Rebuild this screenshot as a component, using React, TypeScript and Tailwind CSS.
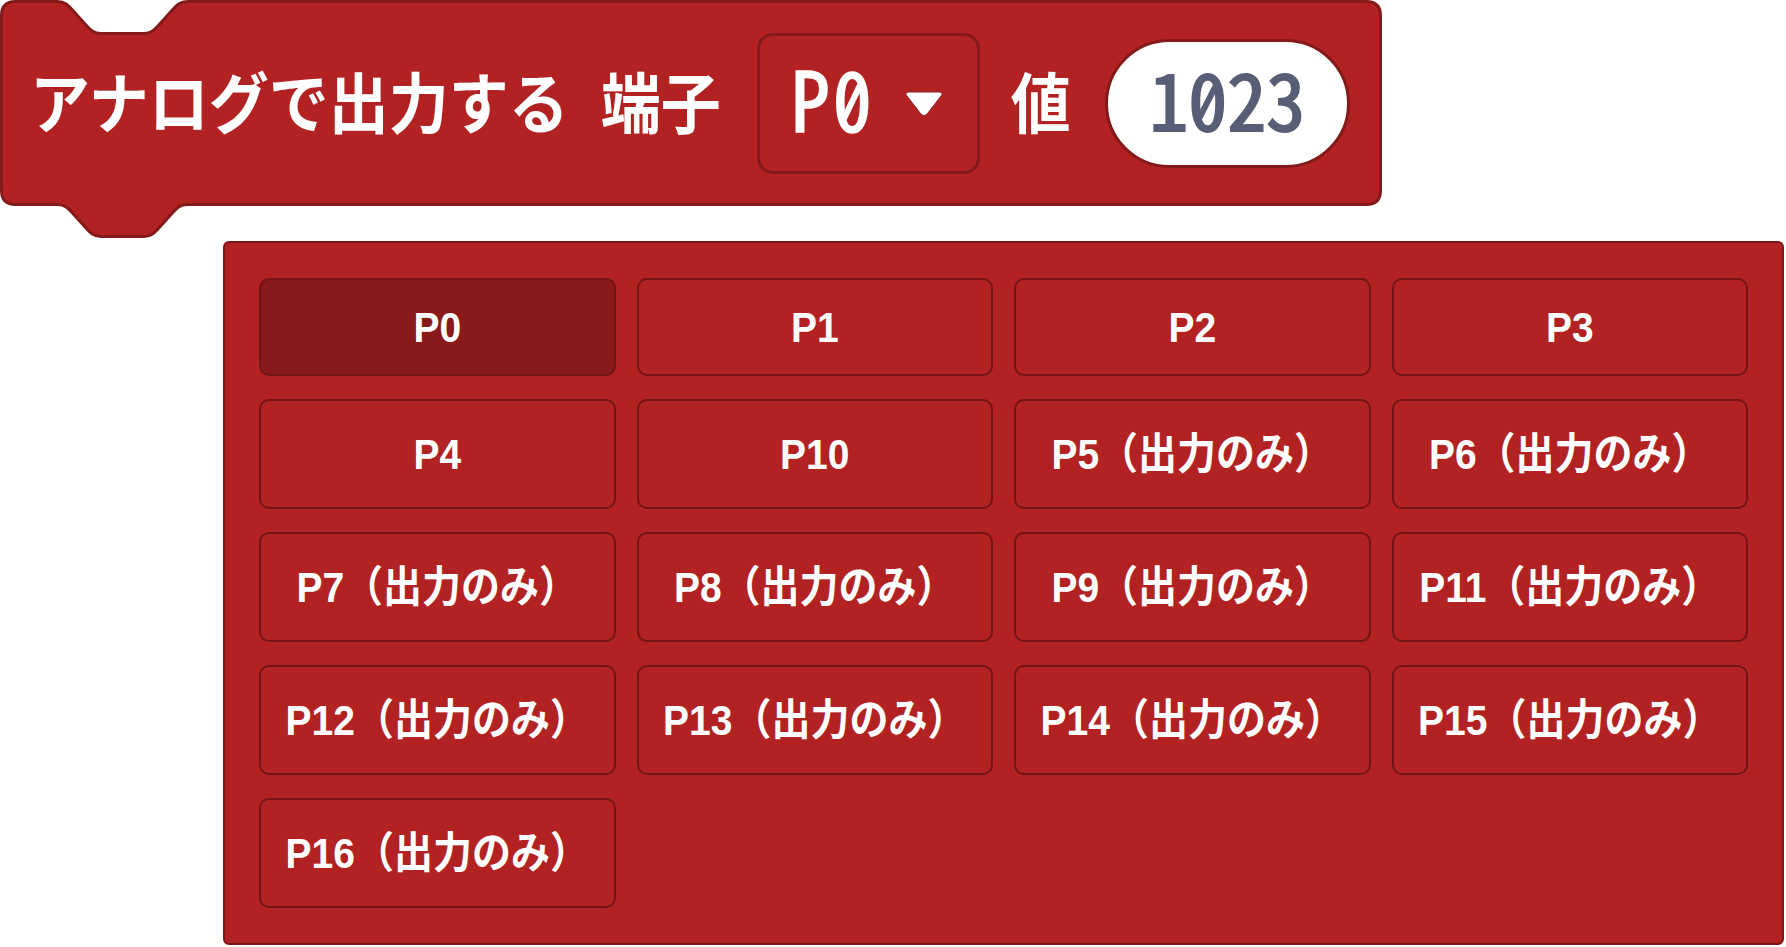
import React from "react";

const pins: { label: string; selected?: boolean }[] = [
  { label: "P0", selected: true },
  { label: "P1" },
  { label: "P2" },
  { label: "P3" },
  { label: "P4" },
  { label: "P10" },
  { label: "P5（出力のみ）" },
  { label: "P6（出力のみ）" },
  { label: "P7（出力のみ）" },
  { label: "P8（出力のみ）" },
  { label: "P9（出力のみ）" },
  { label: "P11（出力のみ）" },
  { label: "P12（出力のみ）" },
  { label: "P13（出力のみ）" },
  { label: "P14（出力のみ）" },
  { label: "P15（出力のみ）" },
  { label: "P16（出力のみ）" },
];

// Scratch-style notch (x scale 3.6, depth 32)
const blockPath =
  "M 1.5 15.5 Q 1.5 1.5 15.5 1.5 H 57.6 " +
  "c 7.2 0 10.8 4 14.4 8 l 14.4 16 c 3.6 4 7.2 8 14.4 8 h 43.2 " +
  "c 7.2 0 10.8 -4 14.4 -8 l 14.4 -16 c 3.6 -4 7.2 -8 14.4 -8 " +
  "H 1366.5 Q 1380.5 1.5 1380.5 15.5 V 190.5 Q 1380.5 204.5 1366.5 204.5 H 187.2 " +
  "c -7.2 0 -10.8 4 -14.4 8 l -14.4 16 c -3.6 4 -7.2 8 -14.4 8 h -43.2 " +
  "c -7.2 0 -10.8 -4 -14.4 -8 l -14.4 -16 c -3.6 -4 -7.2 -8 -14.4 -8 " +
  "H 15.5 Q 1.5 204.5 1.5 190.5 Z";

const cjk = { fontFamily: "'Noto Sans CJK JP', sans-serif" };
const mono = { fontFamily: "'Noto Sans Mono CJK JP', 'Noto Sans CJK JP', monospace" };

/** A zero with a slash, as the monospaced field font shows it. */
function SlashedZero() {
  return (
    <span className="relative inline-block">
      0
      <span className="absolute left-[16px] top-[24px] w-[6px] h-[42px] rotate-[27deg] bg-current rounded-[1px]" />
    </span>
  );
}

export default function App() {
  return (
    <div className="w-[1786px] h-[947px] bg-white overflow-hidden">
      {/* Block */}
      <div className="relative w-[1382px] h-[240px]">
        <svg
          className="absolute inset-0"
          width="1382"
          height="240"
          viewBox="0 0 1382 240"
        >
          <path d={blockPath} fill="#B22222" stroke="#841919" strokeWidth="3" />
        </svg>
        <div className="relative flex items-center h-[206px] pl-[30px] text-white">
          <span
            className="inline-block pb-[6px] scale-y-[1.1] text-[60px] leading-none font-bold"
            style={cjk}
          >
            アナログで出力する
          </span>
          <span
            className="inline-block pb-[6px] ml-[32px] scale-y-[1.1] text-[60px] leading-none font-bold"
            style={cjk}
          >
            端子
          </span>
          <div className="ml-[36px] w-[223px] h-[141px] flex items-center pl-[31px] border-[3px] border-[#841919] rounded-[16px] bg-[#B22222]">
            <span
              className="inline-block pb-[14px] scale-y-[1.06] text-[78px] leading-none font-normal tracking-[3px] [-webkit-text-stroke:1.6px_currentColor] [font-feature-settings:'hwid']"
              style={mono}
            >
              P<SlashedZero />
            </span>
            <svg className="ml-[29px]" width="40" height="27" viewBox="0 0 40 27">
              <path
                d="M5 2 H35 Q40 2 37 6 L23.5 23.5 Q20 27.5 16.5 23.5 L3 6 Q0 2 5 2 Z"
                fill="#ffffff"
                stroke="#8a2020"
                strokeWidth="1"
              />
            </svg>
          </div>
          <span
            className="inline-block pb-[6px] ml-[31px] scale-y-[1.1] text-[60px] leading-none font-bold"
            style={cjk}
          >
            値
          </span>
          <div className="ml-[34px] w-[245px] h-[129px] flex items-center justify-center rounded-full border-[3px] border-[#841919] bg-white">
            <span
              className="inline-block pb-[12px] text-[78px] leading-none font-normal text-[#575E75] [-webkit-text-stroke:2px_currentColor] [font-feature-settings:'hwid']"
              style={mono}
            >
              1<SlashedZero />23
            </span>
          </div>
        </div>
      </div>

      {/* Dropdown panel */}
      <div className="ml-[223px] mt-[1px] w-[1561px] border-2 border-[#7E1616] rounded-[6px] bg-[#B22222] px-[34px] pt-[35px] pb-[35px]">
        <div className="grid grid-cols-4 gap-x-[21px] gap-y-[23px] grid-rows-[98px_110px_110px_110px_110px]">
          {pins.map((p) => (
            <div
              key={p.label}
              className={`flex items-center justify-center border-2 border-[#731313] rounded-[10px] ${
                p.selected ? "bg-[#8A191B]" : "bg-[#B22222]"
              }`}
            >
              <span
                className="inline-block scale-y-[1.1] text-[39px] leading-none font-bold text-white"
                style={{ fontFamily: "'Liberation Sans', 'Noto Sans CJK JP', sans-serif" }}
              >
                {p.label}
              </span>
            </div>
          ))}
        </div>
      </div>
    </div>
  );
}
